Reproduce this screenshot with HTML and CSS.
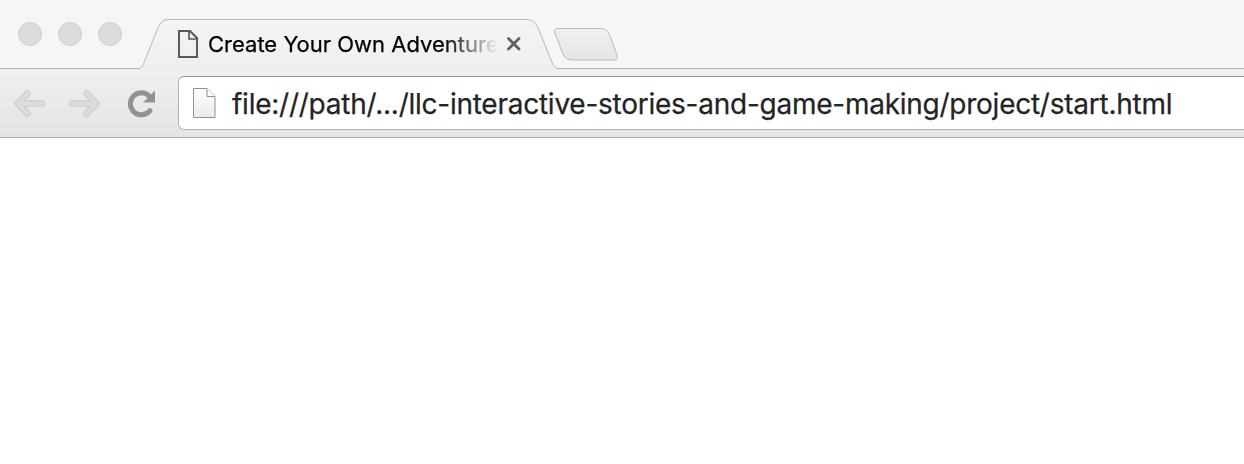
FILE: index.html
```html
<!DOCTYPE html>
<html lang="en">
<head>
<meta charset="utf-8">
<title>Create Your Own Adventure</title>
<link rel="stylesheet" href="styles.css">
</head>
<body>
<div class="browser">
  <header class="tab-strip">
    <div class="window-controls"><span class="dot"></span><span class="dot"></span><span class="dot"></span></div>
    <div class="tab">
      <svg class="tab-shape" width="420" height="51" viewBox="0 0 420 51">
        <defs><linearGradient id="tabFill" x1="0" y1="0" x2="0" y2="1"><stop offset="0" stop-color="#f4f4f4"/><stop offset="1" stop-color="#efefef"/></linearGradient></defs>
        <path d="M0 51V49.500C2.500 49.500 4 46 6 41L18.500 10C21.500 3 24 .5 30 .5H387C394 .5 397 4 400 11L412 41C415 48 416 49.500 420 49.500V51Z" fill="url(#tabFill)"/>
        <path d="M0 49.500C2.500 49.500 4 46 6 41L18.500 10C21.500 3 24 .5 30 .5H387C394 .5 397 4 400 11L412 41C415 48 416 49.500 420 49.500" fill="none" stroke="#b5b5b5"/>
      </svg>
      <svg class="tab-page" width="20" height="28" viewBox="0 0 20 28" fill="none" stroke="#595959" stroke-width="2"><path d="M1 1H12L19 8V27H1Z"/><path d="M11 1V9H19" stroke-width="1.700"/></svg>
      <span class="tab-title">Create Your Own Adventure</span>
      <svg class="tab-close" width="16" height="16" viewBox="0 0 16 16" fill="none" stroke="#606060" stroke-width="2.800" stroke-linecap="round"><path d="M2.500 2.500L13 13M13 2.500L2.500 13"/></svg>
    </div>
    <svg class="new-tab" width="64" height="33" viewBox="0 0 64 33">
      <defs><linearGradient id="newFill" x1="0" y1="0" x2="0" y2="1"><stop offset="0" stop-color="#efefef"/><stop offset="1" stop-color="#e6e6e6"/></linearGradient></defs>
      <path d="M3.500 .5H46C52 .5 54 3 56 8L63 27C64 30.500 63 32 60 32H19C13 32 10.500 29.500 8.500 25L1 5C0 2 .8 .5 3.500 .5Z" fill="url(#newFill)" stroke="#b9b9b9"/>
    </svg>
  </header>
  <div class="toolbar">
    <svg class="nav" width="31" height="28" viewBox="0 0 31 28"><path d="M13.500 3.500L4 13.500L13.500 23.500M5 13.500H28" fill="none" stroke="#c8c8c8" stroke-width="6.400" stroke-linecap="round"/><path d="M13.500 3.500L4 13.500L13.500 23.500M5 13.500H28" fill="none" stroke="#dcdcdc" stroke-width="4.600" stroke-linecap="round"/></svg>
    <svg class="nav forward" width="31" height="28" viewBox="0 0 31 28"><path d="M17.500 3.500L27 13.500L17.500 23.500M26 13.500H3" fill="none" stroke="#c8c8c8" stroke-width="6.400" stroke-linecap="round"/><path d="M17.500 3.500L27 13.500L17.500 23.500M26 13.500H3" fill="none" stroke="#dcdcdc" stroke-width="4.600" stroke-linecap="round"/></svg>
    <svg class="nav reload" width="28" height="28" viewBox="0 0 28 28"><path d="M21.500 6.400A11 11 0 1 0 22 20.600" fill="none" stroke="#929292" stroke-width="5" stroke-linecap="round"/><path d="M27 .5V12.500H15Z" fill="#929292"/></svg>
    <div class="address">
      <svg class="doc" width="23" height="31" viewBox="0 0 23 31"><defs><linearGradient id="docFill" x1="0" y1="0" x2="0" y2="1"><stop offset="0" stop-color="#fff"/><stop offset="1" stop-color="#ebebeb"/></linearGradient></defs><path d="M.5 .5H14L22 8.500V29.500H.5Z" fill="url(#docFill)" stroke="#929292"/><path d="M14 .5V8.500H22" fill="#fff" stroke="#929292"/></svg>
      <span class="url">file:///path/.../llc-interactive-stories-and-game-making/project/start.html</span>
    </div>
  </div>
  <main class="page"></main>
</div>
</body>
</html>
```
FILE: styles.css
```css
body { margin: 0; background: #fff; }
svg { display: block; flex: none; }
.browser { height: 464px; overflow: hidden; font-family: Inter, sans-serif; }
.tab-strip {
  box-sizing: border-box;
  display: flex;
  height: 69px;
  background: #f6f6f6;
  border-bottom: 1px solid #b5b5b5;
}
.window-controls { display: flex; gap: 16px; padding: 22px 17px 0 18px; }
.dot {
  box-sizing: border-box;
  width: 24px;
  height: 24px;
  border: 1px solid #cecece;
  border-radius: 50%;
  background: #dcdcdc;
}
.tab {
  position: relative;
  box-sizing: border-box;
  display: flex;
  align-items: flex-start;
  width: 420px;
  height: 50px;
  margin-top: 19px;
  padding-left: 39px;
}
.tab-shape { position: absolute; left: 0; top: 0; }
.tab-page { position: relative; margin-top: 11px; }
.tab-title {
  position: relative;
  width: 288px;
  margin: 11px 0 0 10px;
  white-space: nowrap;
  font-size: 22px;
  -webkit-text-stroke: 0.25px #000;
  line-height: 28px;
  color: #000;
  -webkit-mask-image: linear-gradient(to right, #000 235px, transparent 290px);
  mask-image: linear-gradient(to right, #000 235px, transparent 290px);
}
.tab-close { position: relative; margin: 17px 0 0 10px; }
.new-tab { margin: 28px 0 0 -5px; }
.toolbar {
  box-sizing: border-box;
  display: flex;
  height: 69px;
  padding: 7px 0 0 14px;
  background: linear-gradient(#efefef, #e4e4e4);
  border-bottom: 1px solid #b0b0b0;
}
.nav { margin-top: 14px; }
.forward { margin-left: 24px; }
.reload { margin-left: 28px; }
.address {
  box-sizing: border-box;
  display: flex;
  flex: 1;
  height: 54px;
  margin-left: 22px;
  padding: 11px 0 0 14px;
  background: #fff;
  border: 1px solid #b2b2b2;
  border-top-color: #959595;
  border-right: 0;
  border-radius: 6px 0 0 6px;
}
.url {
  margin: -1px 0 0 16px;
  font-size: 28px;
  -webkit-text-stroke: 0.25px #242424;
  letter-spacing: -0.25px;
  line-height: 34px;
  white-space: nowrap;
  color: #242424;
}
```
